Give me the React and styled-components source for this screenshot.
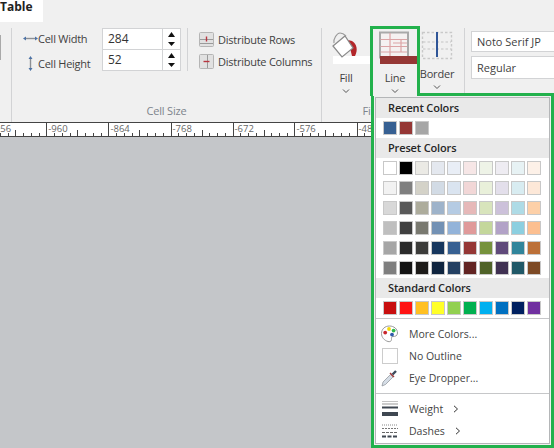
import React from 'react';
import styled, { createGlobalStyle } from 'styled-components';

const Global = createGlobalStyle`
  html, body { margin: 0; padding: 0; width: 554px; height: 448px; overflow: hidden; background: #c4c6c9; }
  body { font-family: "Open Sans", "Noto Sans", sans-serif; color: #3c3c3c; }
  * { box-sizing: border-box; }
`;

const Page = styled.div`
  position: relative; width: 554px; height: 448px; overflow: hidden;
  display: flex; flex-direction: column; background: #c4c6c9;
`;
const TabBar = styled.div`height: 22px; background: #f0f0f0; display: flex; flex: none;`;
const Tab = styled.div`
  width: 43px; height: 22px; background: #fff; font-size: 12px; font-weight: 700; line-height: 13px; color: #222;
`;
const Ribbon = styled.div`
  height: 100px; flex: none; background: #f0f0f0; display: flex; padding-top: 6px; overflow: visible;
`;
const Group = styled.div`
  width: ${p => p.$w}px; flex: none; display: flex; flex-direction: column;
  border-right: ${p => (p.$noline ? 'none' : '1px solid #d2d3d5')};
`;
const GroupBody = styled.div`height: 72px; display: flex; flex: none;`;
const GroupLabel = styled.div`
  height: 22px; text-align: center; font-size: 11px; letter-spacing: -0.2px; line-height: 21px; color: #7d848c; white-space: nowrap;
`;
const StubControl = styled.div`width: 1px; height: 25px; margin-top: 7px; background: #a9a9a9;`;
const SizeLabels = styled.div`width: 90px; padding-left: 11px; display: grid; grid-template-rows: 20px 30px;`;
const SizeLabel = styled.div`display: flex; align-items: center; font-size: 11px; letter-spacing: -0.25px; color: #3f3f3f; white-space: nowrap;`;
const SizeIcon = styled.span`width: 15px; flex: none; display: flex; justify-content: center;`;
const Spins = styled.div`width: 79px; height: 43px; display: flex; flex-direction: column; flex: none;`;
const Spin = styled.div`
  height: ${p => p.$h}px; display: flex; background: #fff; border: 1px solid #d2d3d5;
  margin-top: ${p => (p.$second ? -1 : 0)}px;
`;
const SpinValue = styled.div`flex: 1; padding-left: 5px; font-size: 12px; line-height: 19px; color: #333; border-right: 1px solid #d2d3d5;`;
const SpinArrows = styled.div`width: 17px; display: flex; flex-direction: column; align-items: center; justify-content: space-between; padding: 3px 0;`;
const VRule = styled.div`width: 1px; height: 43px; margin: 0 11px 0 6px; background: #d2d3d5; flex: none;`;
const DistList = styled.div`display: flex; flex-direction: column;`;
const DistRow = styled.div`height: 22px; display: flex; align-items: center; gap: 4px; font-size: 11px; letter-spacing: -0.25px; color: #3f3f3f; white-space: nowrap;`;

const Tool = styled.div`
  width: ${p => p.$w}px; flex: none; display: flex; flex-direction: column; align-items: center; padding-top: 3px;
  font-size: 11px; letter-spacing: -0.2px; color: #3f3f3f;
`;
const ActiveTool = styled(Tool)`
  height: 70px; margin-top: -2px; padding-top: 2px; position: relative; z-index: 3;
  background: #f0f0f0; border: 3px solid #22b14c; border-bottom: none;
`;
const ToolText = styled.div`height: 14px; line-height: 14px; margin-top: 7px;`;
const Chev = styled.svg`display: block; margin-top: 2px; width: 8px; height: 8px;`;
const Selects = styled.div`padding: 3px 0 0 6px; display: flex; flex-direction: column; gap: 4px;`;
const SelectBox = styled.div`
  width: 100px; height: ${p => p.$h}px; background: #fff; border: 1px solid #d2d3d5; padding-left: 5px;
  font-size: 11px; line-height: ${p => p.$h - 2}px; color: #3f3f3f; white-space: nowrap;
`;
const RulerSvg = styled.svg`display: block; flex: none; width: 554px; height: 15px;`;
const Canvas = styled.div`flex: 1; background: #c4c6c9;`;

const Menu = styled.div`
  position: absolute; left: 371px; top: 93px; width: 183px; height: 355px; z-index: 2;
  background: #f0f0f0; border: 3px solid #22b14c; padding: 1px;
`;
const Panel = styled.div`background: #fff; border: 1px solid #b4b6b8; height: 100%; width: 175px;`;
const Header = styled.div`
  height: 20px; background: #e9e9e9; padding-left: 12px; font-size: 11px; font-weight: 600; letter-spacing: -0.15px; line-height: 20px; color: #262626;
`;
const SwatchGrid = styled.div`
  display: grid; grid-template-columns: repeat(10, 14px); column-gap: 2px; row-gap: 6px; padding: 3px 7px;
`;
const Swatch = styled.div`width: 14px; height: 14px; background: ${p => p.$c}; border: 1px solid #c8c8c8;`;
const Divider = styled.div`height: 1px; background: #c6c7c9;`;
const Items = styled.div`padding: 4px 0;`;
const Item = styled.div`
  height: 22px; display: flex; align-items: center; padding-left: 5px; font-size: 10.5px; color: #444; white-space: nowrap;
`;
const ItemIcon = styled.span`width: 17px; height: 18px; margin-right: 11px; flex: none; display: flex; align-items: center; justify-content: center;`;
const Caret = styled.svg`width: 6px; height: 8px; margin-left: 10px; display: block;`;
const NoLine = styled.span`width: 16px; height: 16px; display: block; background: #fff; border: 1px solid #ccc;`;

const recent = ['#376092', '#953735', '#a6a6a6'];
const preset = [
  '#ffffff','#000000','#ebeae5','#e4e8ef','#e9eef6','#f6e6e6','#eef3e7','#eeecf2','#e7f2f4','#fdf1e8',
  '#f2f2f2','#7f7f7f','#d4d2c8','#d2dbe5','#dae4f0','#f2d7d7','#e9f0da','#e3dfeb','#d8ecf1','#fde8d8',
  '#d8d8d8','#595959','#adac9c','#9eb3ca','#b5cbe3','#e6b8b8','#d8e4bc','#ccc1da','#aedbe6','#fdd0a8',
  '#bfbfbf','#404040','#797970','#7391b4','#93b3d9','#e09a9a','#c4d79b','#b2a2c7','#8ccfe0','#fcbf90',
  '#a6a6a6','#2b2b2b','#3c3c3a','#17375e','#376092','#953735','#76923c','#604a7b','#31859b','#bc7038',
  '#7f7f7f','#141414','#1d1b19','#10253f','#244062','#632523','#4f6228','#403152','#205867','#7d4a25',
];
const standard = ['#c80f0f','#ff1414','#ffc022','#ffff28','#92d050','#00b050','#00b0f0','#0070c0','#002060','#7030a0'];

const Chevron = () => (
  <Chev viewBox="0 0 8 8"><path d="M1 2.5 L4 5.5 L7 2.5" fill="none" stroke="#555" strokeWidth="1" /></Chev>
);
const SpinUp = () => <svg width="7" height="5" viewBox="0 0 7 5"><path d="M3.5 0 L7 5 L0 5 Z" fill="#111" /></svg>;
const SpinDown = () => <svg width="7" height="4" viewBox="0 0 7 4"><path d="M0 0 L7 0 L3.5 4 Z" fill="#111" /></svg>;

const WidthIcon = () => (
  <svg width="15" height="7" viewBox="0 0 15 7">
    <path d="M2 3.5 H13" stroke="#8c8f94" strokeWidth="1.4" />
    <path d="M0 3.5 L3 1.5 V5.5 Z M15 3.5 L12 1.5 V5.5 Z" fill="#4d73a6" />
  </svg>
);
const HeightIcon = () => (
  <svg width="7" height="15" viewBox="0 0 7 15">
    <path d="M3.5 2 V13" stroke="#8c8f94" strokeWidth="1.4" />
    <path d="M3.5 0 L1.5 3 H5.5 Z M3.5 15 L1.5 12 H5.5 Z" fill="#4d73a6" />
  </svg>
);
const DistIcon = ({ rows }) => (
  <svg width="15" height="15" viewBox="0 0 15 15">
    <rect x=".5" y=".5" width="14" height="14" rx="1" fill="#e1e1e1" stroke="#b5b5b5" />
    {rows ? (
      <>
        <path d="M1 7.5 H14 M1 11.5 H14" stroke="#9a9a9a" />
        <path d="M7.5 4.5 V9.5" stroke="#b8353f" strokeWidth="1.4" />
      </>
    ) : (
      <>
        <path d="M8.5 1 V14" stroke="#9a9a9a" />
        <path d="M4.5 7.5 H10.5" stroke="#b8353f" strokeWidth="1.4" />
      </>
    )}
  </svg>
);
const FillIcon = () => (
  <svg width="48" height="33" viewBox="0 0 48 33">
    <rect x="11" y="25" width="37" height="8" fill="#fff" />
    <path d="M30 10 C35 13 36 19 33 25 L30 25 L26 9 Z" fill="#b3262a" />
    <path d="M11 15 L23 5 L31 17 L20 26 Z" fill="#fff" stroke="#8a8a8a" strokeWidth="1.2" />
    <path d="M12 12 C11 8 15 2 18 2 C20 2 22 3 24 5" fill="none" stroke="#9a9a9a" strokeWidth="1.2" />
  </svg>
);
const LineIcon = () => (
  <svg width="44" height="33" viewBox="0 0 44 33">
    <rect x="7" y="1.5" width="28" height="25" fill="#f5f1f1" stroke="#a9a9a9" strokeWidth="2" />
    <path d="M7.5 8.5 H34 M7.5 15.5 H34 M7.5 21 H34 M17 2 V26 M28 9 V21 M20 12 H34" stroke="#dca4a6" strokeWidth="1.2" fill="none" />
    <rect x="7" y="25" width="37" height="8" fill="#953735" />
  </svg>
);
const BorderIcon = () => (
  <svg width="34" height="29" viewBox="0 0 34 29">
    <rect x="2.5" y="1.5" width="29" height="26" fill="none" stroke="#c9c9c9" strokeWidth="1.4" strokeDasharray="2.5 2" />
    <path d="M3 11 H31 M3 18 H31" stroke="#c4c4c4" strokeDasharray="2.5 2" />
    <path d="M17 1 V26" stroke="#2f5597" strokeWidth="2" />
  </svg>
);
const PaletteIcon = () => (
  <svg width="17" height="18" viewBox="0 0 17 18">
    <path d="M8.5 1 C13 1 16.5 4 16.5 8 C16.5 11 14 11.5 12 11.5 C10 11.5 10.5 13.5 10.5 14.5 C10.5 16.5 8.5 17 7 16.5 C3.5 15.5 .5 12.5 .5 8.5 C.5 4 4 1 8.5 1 Z" fill="#fff" stroke="#9a9a9a" />
    <circle cx="8" cy="4" r="1.9" fill="#f5d90a" />
    <circle cx="12.6" cy="5.6" r="1.9" fill="#2fb84a" />
    <circle cx="4.2" cy="7.6" r="1.9" fill="#c8262c" />
    <circle cx="11" cy="9.6" r="1.9" fill="#2f5aa8" />
  </svg>
);
const DropperIcon = () => (
  <svg width="17" height="18" viewBox="0 0 17 18">
    <path d="M1 17 L2 13 L9.5 5.5 L12 8 L4.5 15.5 Z" fill="#d5dde6" stroke="#8a8f96" strokeWidth=".7" />
    <path d="M9 4 L13 8" stroke="#a33a3a" strokeWidth="1.4" />
    <path d="M11.5 5.5 L15 2" stroke="#3c4a5c" strokeWidth="2.4" />
  </svg>
);
const WeightIcon = () => (
  <svg width="16" height="16" viewBox="0 0 16 16">
    <path d="M0 .5 H16" stroke="#c4c4c4" />
    <path d="M0 3 H16" stroke="#999" />
    <path d="M0 6.5 H16" stroke="#3f4751" strokeWidth="2" />
    <path d="M0 13 H16" stroke="#3f4751" strokeWidth="4" />
  </svg>
);
const DashesIcon = () => (
  <svg width="16" height="14" viewBox="0 0 16 14">
    <path d="M0 1 H16" stroke="#888" strokeDasharray="1 1" />
    <path d="M0 4.5 H16" stroke="#777" strokeDasharray="2 1" />
    <path d="M0 8.5 H16" stroke="#666" strokeDasharray="3 1" />
    <path d="M0 12.5 H16" stroke="#3f4751" strokeWidth="2" strokeDasharray="4 1.5" />
  </svg>
);
const CaretIcon = () => (
  <Caret viewBox="0 0 6 8"><path d="M1 .8 L4.5 4 L1 7.2" fill="none" stroke="#333" strokeWidth="1" /></Caret>
);

const majors = [
  { x: -15.7, label: '-1056' },
  { x: 46.3, label: '-960' },
  { x: 108.4, label: '-864' },
  { x: 170.5, label: '-768' },
  { x: 232.5, label: '-672' },
  { x: 294.4, label: '-576' },
  { x: 356.5, label: '-480' },
];
const Ruler = () => (
  <RulerSvg viewBox="0 0 554 15">
    <rect width="554" height="15" fill="#fff" />
    <path d="M0 .5 H554 M0 14.5 H554" stroke="#444" />
    {majors.map(m => (
      <g key={m.x}>
        <path d={`M${Math.round(m.x) + 0.5} 0 V14`} stroke="#444" />
        {[1, 2, 3, 4, 5, 6, 7].map(i => (
          <path
            key={i}
            d={`M${Math.round(m.x + i * 7.75) + 0.5} ${i === 4 ? 8 : 11} V14`}
            stroke="#444"
          />
        ))}
        <text x={m.x + 2} y="10" fontSize="9.5" fill="#666" fontFamily="Open Sans, sans-serif">{m.label}</text>
      </g>
    ))}
  </RulerSvg>
);

export default function App() {
  return (
    <Page>
      <Global />
      <TabBar><Tab>Table</Tab></TabBar>
      <Ribbon>
        <Group $w={12}><GroupBody><StubControl /></GroupBody></Group>
        <Group $w={310}>
          <GroupBody>
            <SizeLabels>
              <SizeLabel><SizeIcon><WidthIcon /></SizeIcon>Cell Width</SizeLabel>
              <SizeLabel><SizeIcon><HeightIcon /></SizeIcon>Cell Height</SizeLabel>
            </SizeLabels>
            <Spins>
              <Spin $h={22}>
                <SpinValue>284</SpinValue>
                <SpinArrows><SpinUp /><SpinDown /></SpinArrows>
              </Spin>
              <Spin $h={22} $second>
                <SpinValue>52</SpinValue>
                <SpinArrows><SpinUp /><SpinDown /></SpinArrows>
              </Spin>
            </Spins>
            <VRule />
            <DistList>
              <DistRow><DistIcon rows />Distribute Rows</DistRow>
              <DistRow><DistIcon />Distribute Columns</DistRow>
            </DistList>
          </GroupBody>
          <GroupLabel>Cell Size</GroupLabel>
        </Group>
        <Group $w={143}>
          <GroupBody>
            <Tool $w={48}>
              <FillIcon />
              <ToolText>Fill</ToolText>
              <Chevron />
            </Tool>
            <ActiveTool $w={50}>
              <LineIcon />
              <ToolText>Line</ToolText>
              <Chevron />
            </ActiveTool>
            <Tool $w={34}>
              <BorderIcon />
              <ToolText>Border</ToolText>
              <Chevron />
            </Tool>
          </GroupBody>
          <GroupLabel>Fill &amp; Border</GroupLabel>
        </Group>
        <Group $w={100} $noline>
          <Selects>
            <SelectBox $h={21}>Noto Serif JP</SelectBox>
            <SelectBox $h={23}>Regular</SelectBox>
          </Selects>
        </Group>
      </Ribbon>
      <Ruler />
      <Canvas />
      <Menu>
        <Panel>
          <Header>Recent Colors</Header>
          <SwatchGrid>{recent.map(c => <Swatch key={c} $c={c} />)}</SwatchGrid>
          <Header>Preset Colors</Header>
          <SwatchGrid>{preset.map((c, i) => <Swatch key={i} $c={c} />)}</SwatchGrid>
          <Header>Standard Colors</Header>
          <SwatchGrid>{standard.map(c => <Swatch key={c} $c={c} />)}</SwatchGrid>
          <Divider />
          <Items>
            <Item><ItemIcon><PaletteIcon /></ItemIcon>More Colors...</Item>
            <Item><ItemIcon><NoLine /></ItemIcon>No Outline</Item>
            <Item><ItemIcon><DropperIcon /></ItemIcon>Eye Dropper...</Item>
          </Items>
          <Divider />
          <Items>
            <Item><ItemIcon><WeightIcon /></ItemIcon>Weight<CaretIcon /></Item>
            <Item><ItemIcon><DashesIcon /></ItemIcon>Dashes<CaretIcon /></Item>
          </Items>
        </Panel>
      </Menu>
    </Page>
  );
}
